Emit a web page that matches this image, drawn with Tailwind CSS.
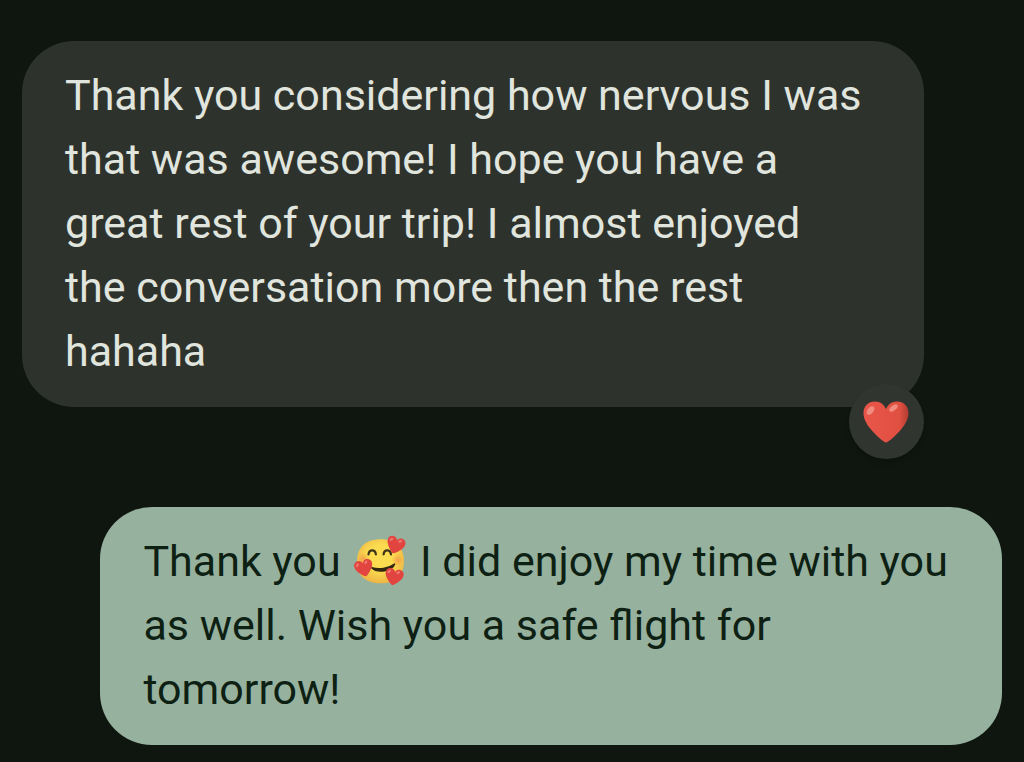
<!DOCTYPE html>
<html lang="en">
<head>
    <meta charset="UTF-8">
    <title>Messages</title>
    <meta name="viewport" content="width=device-width, initial-scale=1.0">
    <!-- Tailwind CDN -->
    <script src="https://cdn.jsdelivr.net/npm/@tailwindcss/browser@4"></script>
</head>
<body class="bg-[#0f150f] min-h-screen font-['Roboto',sans-serif] text-[43px] leading-16">
    <!-- shared heart shape for the reaction and the emoji -->
    <svg class="absolute size-0" aria-hidden="true">
        <defs>
            <linearGradient id="heart-fill" x1="0" y1="0" x2="1" y2="0">
                <stop offset="0" stop-color="#e8564a"/>
                <stop offset="0.8" stop-color="#e05041"/>
                <stop offset="1" stop-color="#b23c31"/>
            </linearGradient>
            <symbol id="heart" viewBox="0 0 46 42">
                <path fill="url(#heart-fill)" d="M23 41.500C21 41.500 13 34.500 8 28.500C3 22.500 .5 17.500 .5 12C.5 5 5.500 .5 12 .5C17.500 .5 21 3.500 23 8C25 3.500 28.500 .5 34 .5C40.500 .5 45.500 5 45.500 12C45.500 17.500 43 22.500 38 28.500C33 34.500 25 41.500 23 41.500Z"/>
                <ellipse cx="7.500" cy="9.500" rx="3" ry="5" transform="rotate(38 7.500 9.500)" fill="#f28c7e"/>
                <ellipse cx="30.500" cy="7" rx="2.500" ry="5" transform="rotate(52 30.500 7)" fill="#f28c7e"/>
            </symbol>
            <!-- small version, softer highlight -->
            <symbol id="heart-small" viewBox="0 0 46 42">
                <path fill="#e2453f" d="M23 41.500C21 41.500 13 34.500 8 28.500C3 22.500 .5 17.500 .5 12C.5 5 5.500 .5 12 .5C17.500 .5 21 3.500 23 8C25 3.500 28.500 .5 34 .5C40.500 .5 45.500 5 45.500 12C45.500 17.500 43 22.500 38 28.500C33 34.500 25 41.500 23 41.500Z"/>
                <ellipse cx="9" cy="10" rx="3" ry="5" transform="rotate(38 9 10)" fill="#ee7770"/>
                <ellipse cx="31" cy="8" rx="3" ry="5" transform="rotate(52 31 8)" fill="#ee7770"/>
            </symbol>
        </defs>
    </svg>

    <main class="flex flex-col px-[22px] pt-[41px] pb-4">
        <div class="relative w-[92%] self-start rounded-[52px] bg-[#2e322d] px-[43px] pt-[22px] pb-6 text-[#e0e5de]">
            <p>Thank you considering how nervous I was<br>
            that was awesome! I hope you have a<br>
            great rest of your trip! I almost enjoyed<br>
            the conversation more then the rest<br>
            hahaha</p>
            <button type="button" aria-label="Heart reaction" class="absolute right-0 -bottom-[52px] flex size-[75px] items-center justify-center rounded-full bg-[#303530] shadow-md">
                <svg class="h-[42px] w-[46px]" aria-hidden="true"><use href="#heart"/></svg>
            </button>
        </div>

        <div class="mt-[100px] w-[92%] self-end rounded-[52px] bg-[#96b29e] px-[43px] pt-[22px] pb-6 text-[#0e1f14]">
            <p>Thank you
            <svg class="mx-[3px] inline-block size-[52px] align-[-11px]" viewBox="0 0 50 50" role="img" aria-label="Smiling face with hearts">
                <defs>
                    <radialGradient id="face-fill" cx="0.5" cy="0.42" r="0.58">
                        <stop offset="0.5" stop-color="#fbdc50"/>
                        <stop offset="1" stop-color="#eeb545"/>
                    </radialGradient>
                    <radialGradient id="blush">
                        <stop offset="0" stop-color="#f58a4a" stop-opacity="0.65"/>
                        <stop offset="1" stop-color="#f58a4a" stop-opacity="0"/>
                    </radialGradient>
                </defs>
                <path fill="url(#face-fill)" d="M26 4C40 4 48 12 48 25C48 39 40 46.500 26 46.500C11 46.500 3 39 3 25C3 12 11 4 26 4Z"/>
                <circle cx="9" cy="23" r="6" fill="url(#blush)"/>
                <circle cx="42" cy="24" r="6" fill="url(#blush)"/>
                <path d="M14 18.500C14.500 13.500 20.500 13.500 21 18.500M28.500 18.500C29 13.500 35 13.500 35.500 18.500" fill="none" stroke="#3e3518" stroke-width="2.200" stroke-linecap="round"/>
                <path d="M17 31.500C24 33.500 33 32.500 39 28C37 34 23 37.500 17 31.500Z" fill="#33280f" stroke="#33280f" stroke-width="1.500" stroke-linejoin="round"/>
                <use href="#heart-small" x="-9" y="-8" width="18" height="17" transform="translate(40 9.500) rotate(18)"/>
                <use href="#heart-small" x="-9" y="-8" width="18" height="17" transform="translate(9.500 31.500) rotate(-14)"/>
                <use href="#heart-small" x="-9" y="-8" width="18" height="17" transform="translate(38.500 40) rotate(12)"/>
            </svg>
            I did enjoy my time with you<br>
            as well. Wish you a safe flight for<br>
            tomorrow!</p>
        </div>
    </main>
</body>
</html>
